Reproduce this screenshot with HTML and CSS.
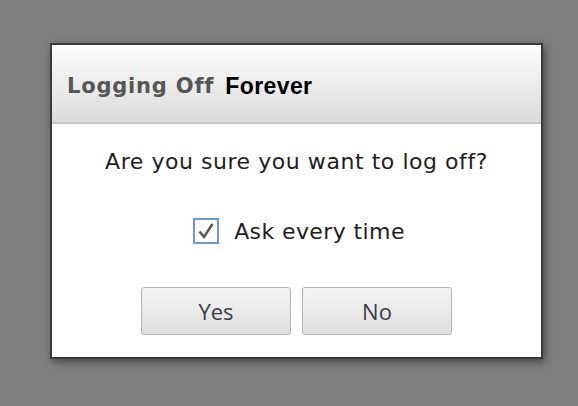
FILE: index.html
```html
<!DOCTYPE html>
<html>
<head>
<meta charset="utf-8">
<link rel="stylesheet" href="styles.css">
</head>
<body>
<div class="dialog">
  <div class="header">
    <span class="title">Logging Off</span>
    <span class="title2">Forever</span>
  </div>
  <div class="body">
    <p class="question">Are you sure you want to log off?</p>
    <label class="check">
      <span class="box">
        <svg width="20" height="20" viewBox="0 0 20 20"><path d="M3.5 10.5 L8 16 L16.5 3" fill="none" stroke="#555" stroke-width="2.5" stroke-linejoin="miter"/></svg>
      </span>
      <span class="check-label">Ask every time</span>
    </label>
    <div class="buttons">
      <button class="btn">Yes</button>
      <button class="btn">No</button>
    </div>
  </div>
</div>
</body>
</html>
```

FILE: styles.css
```css
html, body {
  margin: 0;
  padding: 0;
  background: #7f7f7f;
  width: 578px;
  height: 406px;
  overflow: hidden;
}
body {
  padding: 43px 0 0 50px;
  box-sizing: border-box;
}
.dialog {
  width: 493px;
  height: 316px;
  box-sizing: border-box;
  border: 2px solid #3a3a3a;
  background: #fff;
  box-shadow: 2px 3px 8px rgba(0,0,0,0.45);
  display: flex;
  flex-direction: column;
}
.header {
  height: 79px;
  flex: none;
  box-sizing: border-box;
  background: linear-gradient(#fdfdfd, #dcdcdc);
  border-bottom: 2px solid #c6c6c6;
  display: flex;
  align-items: center;
  padding: 5px 0 0 15px;
  gap: 11px;
}
.title {
  font-family: "DejaVu Sans", Verdana, sans-serif;
  font-weight: bold;
  font-size: 21px;
  letter-spacing: 0.8px;
  color: #565656;
}
.title2 {
  font-family: "Liberation Sans", Arial, sans-serif;
  font-weight: bold;
  font-size: 23px;
  letter-spacing: 0.4px;
  color: #000;
}
.body {
  display: flex;
  flex-direction: column;
  align-items: center;
}
.question {
  margin: 25px 0 0 0;
  height: 26px;
  line-height: 26px;
  font-family: "DejaVu Sans", Verdana, sans-serif;
  font-size: 22px;
  letter-spacing: 0.55px;
  color: #1e1e1e;
}
.check {
  margin-top: 43px;
  display: flex;
  align-items: center;
  gap: 15px;
  margin-left: 5px;
}
.box {
  width: 26px;
  height: 26px;
  box-sizing: border-box;
  border: 2px solid #6b9bd6;
  background: #fff;
  display: flex;
  align-items: center;
  justify-content: center;
}
.check-label {
  font-family: "DejaVu Sans", Verdana, sans-serif;
  font-size: 22px;
  letter-spacing: 0.4px;
  color: #1e1e1e;
}
.buttons {
  margin-top: 43px;
  display: flex;
  gap: 11px;
}
.btn {
  width: 150px;
  height: 48px;
  border: 1px solid #b5b5b5;
  border-radius: 3px;
  background: linear-gradient(#f4f4f4, #e0e0e0);
  font-family: "Open Sans", sans-serif;
  font-size: 22px;
  color: #3c3c48;
  padding: 0;
}
```
